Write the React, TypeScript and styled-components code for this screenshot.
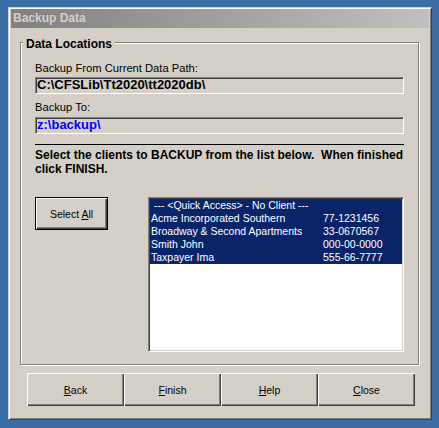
import React from "react";
import styled, { createGlobalStyle } from "styled-components";

const GlobalStyle = createGlobalStyle`
  html, body {
    margin: 0;
    padding: 0;
    background: #3a6ea5;
    font-family: "Liberation Sans", Arial, sans-serif;
  }
  body {
    width: 439px;
    height: 428px;
    overflow: hidden;
  }
`;

const Desktop = styled.div`
  padding: 7px 0 0 8px;
`;

const Window = styled.div`
  box-sizing: border-box;
  width: 424px;
  height: 413px;
  display: flex;
  flex-direction: column;
  background: #d4d0c8;
  border: 1px solid;
  border-color: #d4d0c8 #404040 #404040 #d4d0c8;
  box-shadow: inset 1px 1px 0 #ffffff, inset -1px -1px 0 #808080;
  padding: 1px 2px 2px 2px;
`;

const TitleBar = styled.div`
  height: 19px;
  line-height: 19px;
  padding-left: 2px;
  background: linear-gradient(to right, #808080, #c0c0c0);
  color: #d4d0c8;
  font-weight: bold;
  font-size: 12px;
  white-space: nowrap;
`;

const GroupBox = styled.div`
  position: relative;
  box-sizing: border-box;
  width: 399px;
  margin: 14px 0 0 9px;
  padding: 19px 14px 12px 14px;
  display: flex;
  flex-direction: column;
  border: 1px solid #808080;
  box-shadow: inset 1px 1px 0 #ffffff, 1px 1px 0 #ffffff;
`;

const GroupLabel = styled.span`
  position: absolute;
  top: -5px;
  left: 2px;
  padding: 0 3px;
  background: #d4d0c8;
  font-weight: bold;
  font-size: 12px;
  line-height: 13px;
  color: #000;
`;

const FieldLabel = styled.div<{ $mt: number }>`
  margin-top: ${(p) => p.$mt}px;
  font-size: 11.2px;
  line-height: 13px;
  color: #000;
`;

const TextBox = styled.div<{ $mt: number }>`
  box-sizing: border-box;
  height: 17px;
  margin-top: ${(p) => p.$mt}px;
  padding: 1px 0 0 1px;
  border: 1px solid;
  border-color: #808080 #ffffff #ffffff #808080;
  box-shadow: inset 1px 1px 0 #404040;
  overflow: hidden;
`;

const PathText = styled.div<{ $blue?: boolean }>`
  font-weight: bold;
  font-size: 13px;
  line-height: 12px;
  white-space: nowrap;
  color: ${(p) => (p.$blue ? "#0000ff" : "#000000")};
`;

const Separator = styled.div`
  height: 1px;
  margin-top: 10px;
  background: #000;
`;

const Instructions = styled.div`
  margin-top: 3px;
  font-weight: bold;
  font-size: 12px;
  line-height: 14px;
  white-space: pre;
  color: #000;
`;

const SelectionRow = styled.div`
  margin-top: 21px;
  display: flex;
  justify-content: space-between;
  align-items: flex-start;
`;

const DefaultButton = styled.button`
  box-sizing: border-box;
  width: 73px;
  height: 33px;
  padding: 0;
  margin: 0;
  background: #d4d0c8;
  border: 1px solid #000;
  box-shadow: inset 1px 1px 0 #ffffff, inset -1px -1px 0 #404040,
    inset -2px -2px 0 #808080;
  font-family: "Liberation Sans", Arial, sans-serif;
  font-size: 10.5px;
  color: #000;
`;

const ListBox = styled.div`
  box-sizing: border-box;
  width: 256px;
  height: 155px;
  padding: 1px;
  background: #ffffff;
  border: 1px solid;
  border-color: #808080 #ffffff #ffffff #808080;
  box-shadow: inset 1px 1px 0 #404040, inset -1px -1px 0 #d4d0c8;
`;

const ListRow = styled.div<{ $selected: boolean }>`
  display: grid;
  grid-template-columns: 172px 1fr;
  height: 13px;
  line-height: 13px;
  padding-left: 1px;
  font-size: 10.5px;
  white-space: pre;
  background: ${(p) => (p.$selected ? "#0a246a" : "transparent")};
  color: ${(p) => (p.$selected ? "#ffffff" : "#000000")};
`;

const FullCell = styled.span`
  grid-column: 1 / -1;
`;

const ButtonBar = styled.div`
  display: flex;
  margin: 8px 0 0 16px;
`;

const Button = styled.button`
  box-sizing: border-box;
  width: 97px;
  height: 33px;
  padding: 0;
  margin: 0;
  border: none;
  background: #d4d0c8;
  box-shadow: inset 1px 1px 0 #ffffff, inset -1px -1px 0 #404040,
    inset -2px -2px 0 #808080;
  font-family: "Liberation Sans", Arial, sans-serif;
  font-size: 10.5px;
  color: #000;
`;

const clients = [
  { name: "Acme Incorporated Southern", id: "77-1231456" },
  { name: "Broadway & Second Apartments", id: "33-0670567" },
  { name: "Smith John", id: "000-00-0000" },
  { name: "Taxpayer Ima", id: "555-66-7777" },
];

export default function App() {
  return (
    <>
      <GlobalStyle />
      <Desktop>
        <Window>
          <TitleBar>Backup Data</TitleBar>
          <GroupBox>
            <GroupLabel>Data Locations</GroupLabel>
            <FieldLabel $mt={0}>Backup From Current Data Path:</FieldLabel>
            <TextBox $mt={2}>
              <PathText>C:\CFSLib\Tt2020\tt2020db\</PathText>
            </TextBox>
            <FieldLabel $mt={7}>Backup To:</FieldLabel>
            <TextBox $mt={3}>
              <PathText $blue>z:\backup\</PathText>
            </TextBox>
            <Separator />
            <Instructions>
              {"Select the clients to BACKUP from the list below.  When finished\nclick FINISH."}
            </Instructions>
            <SelectionRow>
              <DefaultButton>
                Select <u>A</u>ll
              </DefaultButton>
              <ListBox>
                <ListRow $selected>
                  <FullCell>{" --- <Quick Access> - No Client ---"}</FullCell>
                </ListRow>
                {clients.map((c) => (
                  <ListRow $selected key={c.id}>
                    <span>{c.name}</span>
                    <span>{c.id}</span>
                  </ListRow>
                ))}
              </ListBox>
            </SelectionRow>
          </GroupBox>
          <ButtonBar>
            <Button>
              <u>B</u>ack
            </Button>
            <Button>
              <u>F</u>inish
            </Button>
            <Button>
              <u>H</u>elp
            </Button>
            <Button>
              <u>C</u>lose
            </Button>
          </ButtonBar>
        </Window>
      </Desktop>
    </>
  );
}
